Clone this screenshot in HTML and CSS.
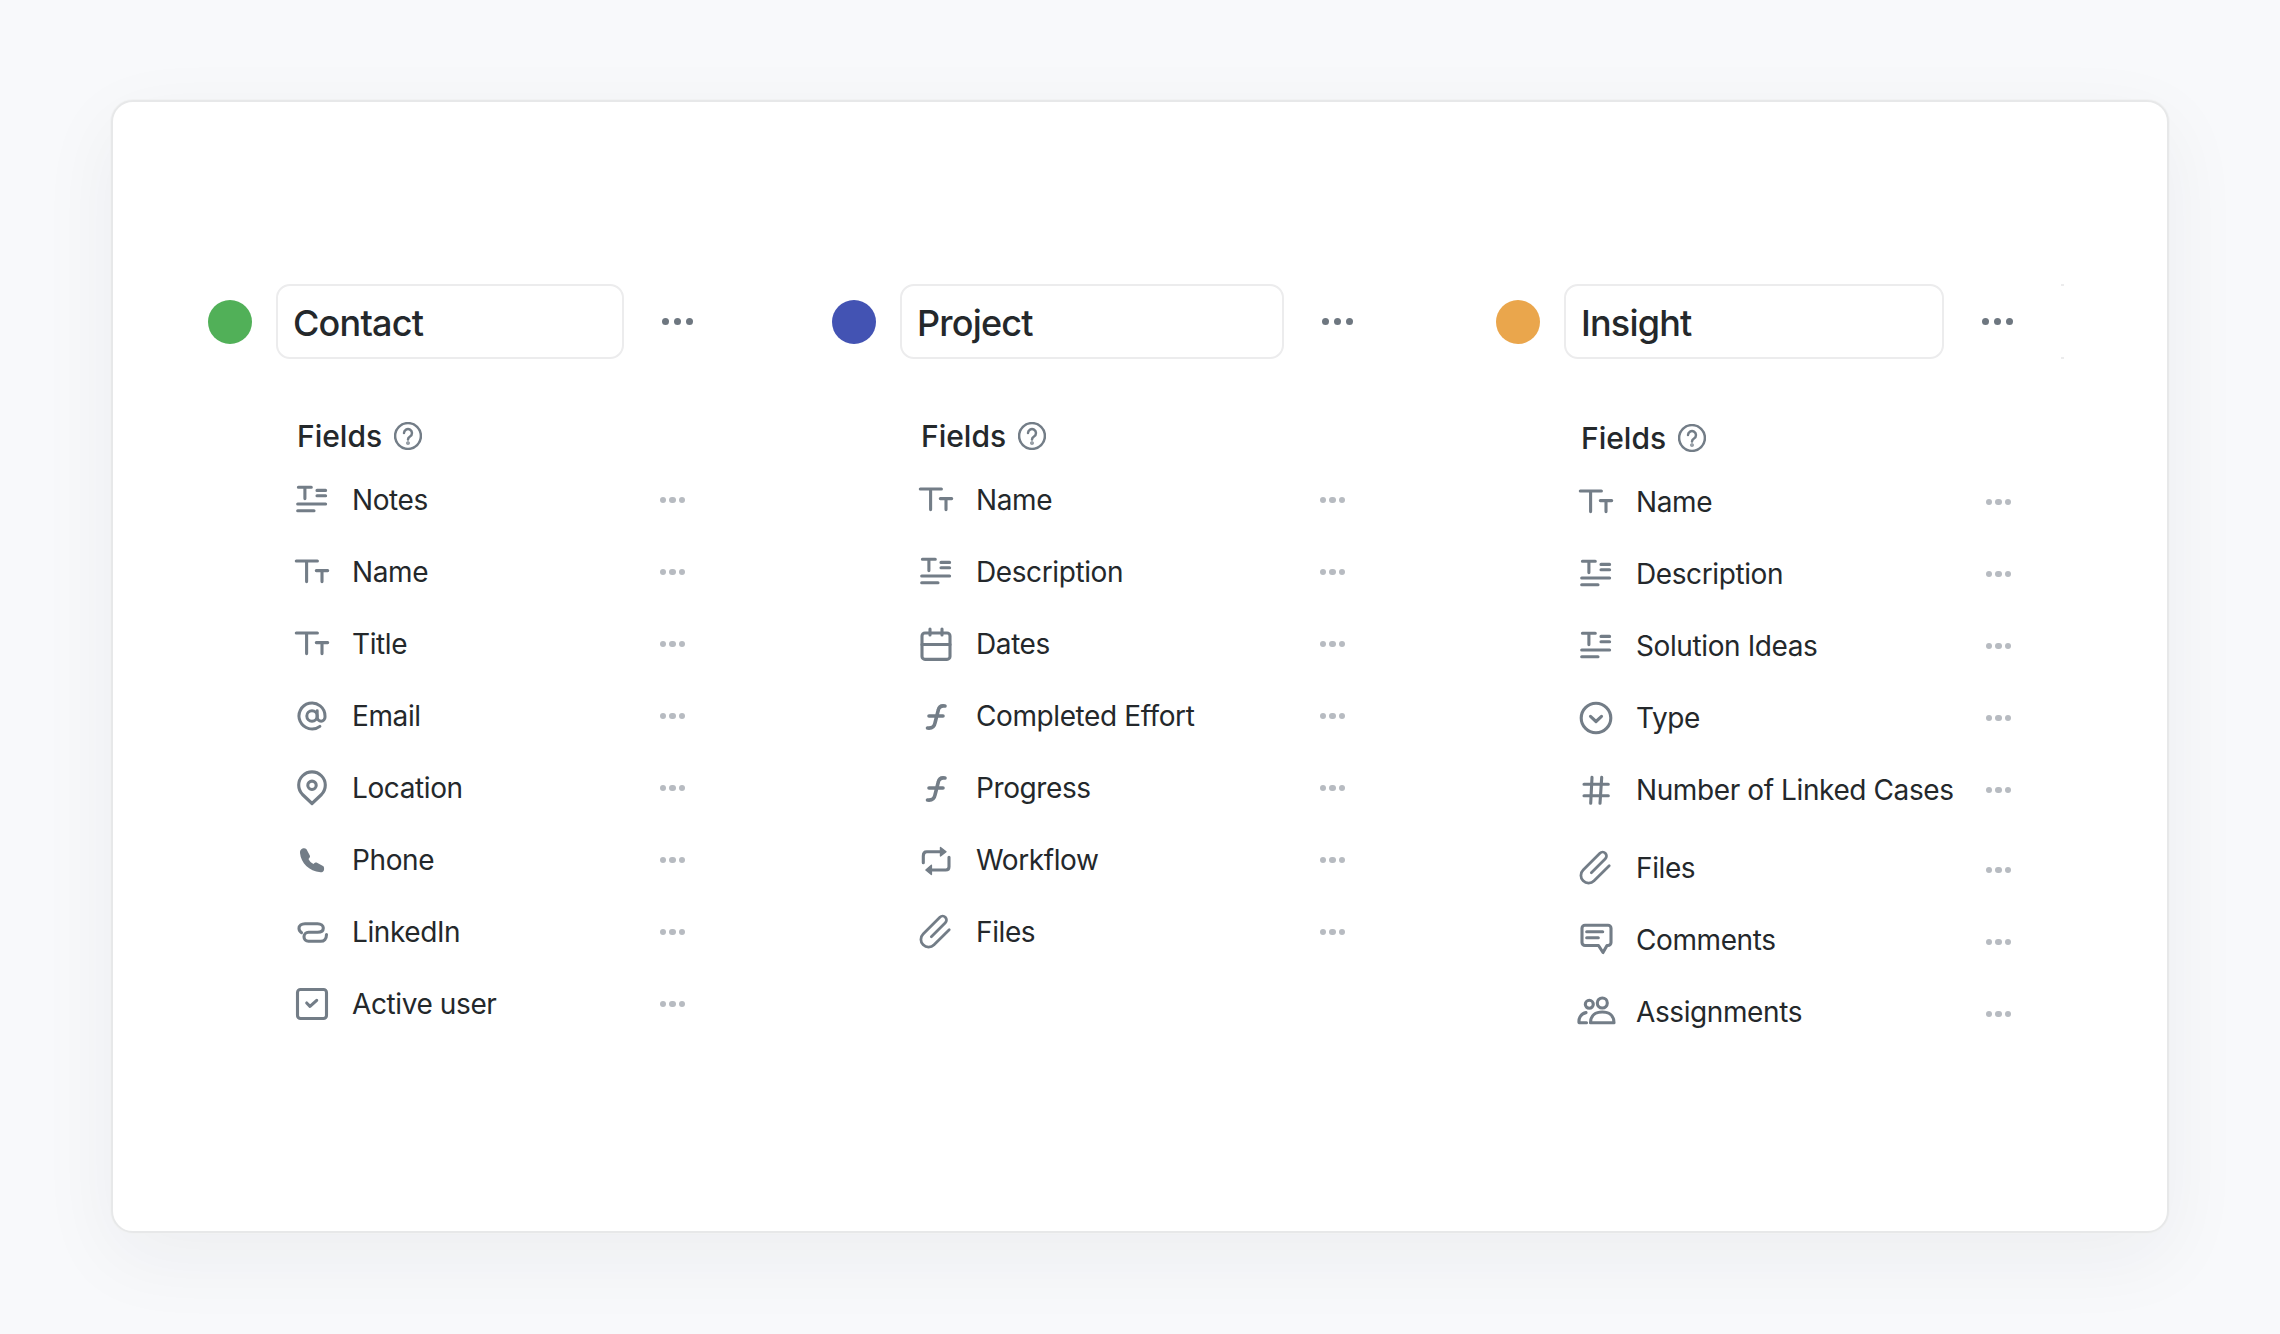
FILE: index.html
```html
<!DOCTYPE html>
<html>

<head>
    <meta charset="utf-8">
    <title>Fields</title>
    <link rel="stylesheet" href="styles.css">
</head>

<body>
    <svg class="sprite">
        <defs>
            <g id="i-longtext">
                <path d="M1.4 2.2H14.3M7.9 2.2V13.6M20 5.4H28.6M20 10.7H28.6M.7 19H28.6M.7 25.7H17" />
            </g>
            <g id="i-text">
                <path d="M-.7 4H20.4M9.6 4V24.6M19.3 13.6H30.7M25 13.6V24.6" />
            </g>
            <g id="i-email">
                <g transform="translate(-.6 -.6) scale(1.3)" stroke-width="2.3">
                    <circle cx="12" cy="12" r="4" />
                    <path d="M16 8v5a3 3 0 0 0 6 0v-1a10 10 0 1 0-3.92 7.94" />
                </g>
            </g>
            <g id="i-location">
                <path d="M15 30.5L5.5 21.5A13.3 13.3 0 1 1 24.5 21.5Z" />
                <circle cx="15" cy="12.3" r="4.2" />
            </g>
            <g id="i-phone">
                <path stroke="none" fill="currentColor" d="M5.5 3.5C7 3 8.5 3.2 9.5 4.3L12.8 10.5C13.3 11.5 13 12.5 11.5 14C12.5 16.3 14.3 18 16.5 19C18 17.6 19 17.3 20 17.8L26 21C27 21.6 27.3 23 27 25C26.5 26.8 25 27.5 23.5 27.3C12 26 4 18 3 8C2.8 6 3.7 4.3 5.5 3.5Z" />
            </g>
            <g id="i-link">
                <path d="M29.5 17.5C29.5 22 27 24.3 23.7 24.3H11.5C8.8 24.3 7 22.3 7 19.8C7 17.2 9 15.3 11.5 15.3H20.5C23.8 15.3 26.3 14 26.3 11C26.3 8.5 24 6.7 20.5 6.7H8C4.5 6.7 2 8.5 2 11.3C2 13 2.8 14.6 4.5 15.6" />
            </g>
            <g id="i-check">
                <rect x=".5" y=".5" width="29" height="29" rx="3" />
                <path d="M9.7 14L13 17.3L19.7 11.3" />
            </g>
            <g id="i-date">
                <rect x="1" y="4" width="28" height="26.4" rx="3" />
                <path d="M1 15.5H29M9 0V6M21 0V6" />
            </g>
            <g id="i-formula">
                <path stroke-width="3.6" d="M24 5C20 4.3 18 5.5 17.3 9L14 22C13.3 26 11 27.5 6.5 27M8 15H22" />
            </g>
            <g id="i-workflow">
                <path d="M2.3 17.7V11C2.3 8.3 3.5 6.7 5.7 6.7H20.7M28 12.3V21.7C28 23.7 26.7 25 24.7 25H9.7" />
                <path fill="currentColor" stroke-width="1.4" d="M19.5 2.5L25 6.7L19.5 10.9ZM10.4 20.3L4.9 25L10.4 29.4Z" />
            </g>
            <g id="i-clip">
                <path transform="rotate(-45 15 15) translate(-1.5 -1.5) scale(1.1)" stroke-width="2.5" d="M25 22H5.5A7 7 0 0 1 5.5 8H27A3.5 3.5 0 0 1 27 15H9" />
            </g>
            <g id="i-select">
                <circle cx="15" cy="15" r="14.8" />
                <path d="M9.5 13.3L15 18.5L20.5 13.3" />
            </g>
            <g id="i-number">
                <path d="M3 9.3H27.3M3 20.7H27.3M11 2.3L9.7 28.3M20.7 2.3L19 28.3" />
            </g>
            <g id="i-comment">
                <path d="M4 .2H27a3 3 0 0 1 3 3V17.5a3 3 0 0 1-3 3H26L22 27.5L17.5 20.5H4a3 3 0 0 1-3-3V3.2a3 3 0 0 1 3-3Z" />
                <path d="M5.7 6.7H21.7M5.7 12.7H17.3" />
            </g>
            <g id="i-people">
                <circle cx="21.3" cy="6" r="5" />
                <path d="M9.5 25.7C9.5 18 15 15 21.3 15C27.5 15 33 18 33 25.7Z" />
                <circle cx="8.3" cy="7.3" r="4" />
                <path d="M5.5 25.7H-2C-2.5 21 0 16.5 5 15.6" />
            </g>
        </defs>
    </svg>

    <div class="card">

        <section class="col col-contact">
            <div class="col-head">
                <span class="swatch swatch-green"></span>
                <div class="name-box">Contact</div>
                <div class="dots dots-dark"><i></i><i></i><i></i></div>
            </div>
            <div class="fields">
                <h2 class="fields-title">Fields
                    <svg class="help" viewBox="0 0 28 28"><circle cx="14" cy="14" r="12.9" /><path d="M10 11a4 4 0 1 1 6 3.5c-1.3.8-2 1.5-2 3" /><circle class="help-dot" cx="14" cy="21" r=".6" /></svg>
                </h2>
                <div class="row"><svg class="icon" viewBox="0 0 30 30"><use href="#i-longtext" /></svg><span class="label">Notes</span><div class="dots"><i></i><i></i><i></i></div></div>
                <div class="row"><svg class="icon" viewBox="0 0 30 30"><use href="#i-text" /></svg><span class="label">Name</span><div class="dots"><i></i><i></i><i></i></div></div>
                <div class="row"><svg class="icon" viewBox="0 0 30 30"><use href="#i-text" /></svg><span class="label">Title</span><div class="dots"><i></i><i></i><i></i></div></div>
                <div class="row"><svg class="icon" viewBox="0 0 30 30"><use href="#i-email" /></svg><span class="label">Email</span><div class="dots"><i></i><i></i><i></i></div></div>
                <div class="row"><svg class="icon" viewBox="0 0 30 30"><use href="#i-location" /></svg><span class="label">Location</span><div class="dots"><i></i><i></i><i></i></div></div>
                <div class="row"><svg class="icon" viewBox="0 0 30 30"><use href="#i-phone" /></svg><span class="label">Phone</span><div class="dots"><i></i><i></i><i></i></div></div>
                <div class="row"><svg class="icon" viewBox="0 0 30 30"><use href="#i-link" /></svg><span class="label">LinkedIn</span><div class="dots"><i></i><i></i><i></i></div></div>
                <div class="row"><svg class="icon" viewBox="0 0 30 30"><use href="#i-check" /></svg><span class="label">Active user</span><div class="dots"><i></i><i></i><i></i></div></div>
            </div>
        </section>

        <section class="col col-project">
            <div class="col-head">
                <span class="swatch swatch-blue"></span>
                <div class="name-box">Project</div>
                <div class="dots dots-dark"><i></i><i></i><i></i></div>
            </div>
            <div class="fields">
                <h2 class="fields-title">Fields
                    <svg class="help" viewBox="0 0 28 28"><circle cx="14" cy="14" r="12.9" /><path d="M10 11a4 4 0 1 1 6 3.5c-1.3.8-2 1.5-2 3" /><circle class="help-dot" cx="14" cy="21" r=".6" /></svg>
                </h2>
                <div class="row"><svg class="icon" viewBox="0 0 30 30"><use href="#i-text" /></svg><span class="label">Name</span><div class="dots"><i></i><i></i><i></i></div></div>
                <div class="row"><svg class="icon" viewBox="0 0 30 30"><use href="#i-longtext" /></svg><span class="label">Description</span><div class="dots"><i></i><i></i><i></i></div></div>
                <div class="row"><svg class="icon" viewBox="0 0 30 30"><use href="#i-date" /></svg><span class="label">Dates</span><div class="dots"><i></i><i></i><i></i></div></div>
                <div class="row"><svg class="icon" viewBox="0 0 30 30"><use href="#i-formula" /></svg><span class="label">Completed Effort</span><div class="dots"><i></i><i></i><i></i></div></div>
                <div class="row"><svg class="icon" viewBox="0 0 30 30"><use href="#i-formula" /></svg><span class="label">Progress</span><div class="dots"><i></i><i></i><i></i></div></div>
                <div class="row"><svg class="icon" viewBox="0 0 30 30"><use href="#i-workflow" /></svg><span class="label">Workflow</span><div class="dots"><i></i><i></i><i></i></div></div>
                <div class="row"><svg class="icon" viewBox="0 0 30 30"><use href="#i-clip" /></svg><span class="label">Files</span><div class="dots"><i></i><i></i><i></i></div></div>
            </div>
        </section>

        <section class="col col-insight">
            <div class="col-head">
                <span class="swatch swatch-orange"></span>
                <div class="name-box">Insight</div>
                <div class="dots dots-dark"><i></i><i></i><i></i></div>
                <div class="next-box"></div>
            </div>
            <div class="fields">
                <h2 class="fields-title">Fields
                    <svg class="help" viewBox="0 0 28 28"><circle cx="14" cy="14" r="12.9" /><path d="M10 11a4 4 0 1 1 6 3.5c-1.3.8-2 1.5-2 3" /><circle class="help-dot" cx="14" cy="21" r=".6" /></svg>
                </h2>
                <div class="row"><svg class="icon" viewBox="0 0 30 30"><use href="#i-text" /></svg><span class="label">Name</span><div class="dots"><i></i><i></i><i></i></div></div>
                <div class="row"><svg class="icon" viewBox="0 0 30 30"><use href="#i-longtext" /></svg><span class="label">Description</span><div class="dots"><i></i><i></i><i></i></div></div>
                <div class="row"><svg class="icon" viewBox="0 0 30 30"><use href="#i-longtext" /></svg><span class="label">Solution Ideas</span><div class="dots"><i></i><i></i><i></i></div></div>
                <div class="row"><svg class="icon" viewBox="0 0 30 30"><use href="#i-select" /></svg><span class="label">Type</span><div class="dots"><i></i><i></i><i></i></div></div>
                <div class="row row-tall"><svg class="icon" viewBox="0 0 30 30"><use href="#i-number" /></svg><span class="label">Number of Linked Cases</span><div class="dots"><i></i><i></i><i></i></div></div>
                <div class="row row-shift"><svg class="icon" viewBox="0 0 30 30"><use href="#i-clip" /></svg><span class="label">Files</span><div class="dots"><i></i><i></i><i></i></div></div>
                <div class="row row-shift"><svg class="icon" viewBox="0 0 30 30"><use href="#i-comment" /></svg><span class="label">Comments</span><div class="dots"><i></i><i></i><i></i></div></div>
                <div class="row row-shift"><svg class="icon" viewBox="0 0 30 30"><use href="#i-people" /></svg><span class="label">Assignments</span><div class="dots"><i></i><i></i><i></i></div></div>
            </div>
        </section>

    </div>
</body>

</html>
```
FILE: styles.css
```css
* {
    box-sizing: border-box;
}

body {
    margin: 0;
    padding: 100px 111px 101px;
    background-color: #f8f9fb;
    font-family: Inter, "Liberation Sans", sans-serif;
    color: #24282b;
}

.sprite {
    display: none;
}

.card {
    display: flex;
    height: 1133px;
    padding: 182px 0 0 95px;
    background-color: #fff;
    border: 2px solid #e7e8e9;
    border-radius: 22px;
    box-shadow: 0 0 0 1px #f1f2f3, 0 24px 80px rgba(30, 40, 60, 0.055);
}

/* columns */
.col-contact {
    width: 624px;
}

.col-project {
    width: 664px;
}

.col-head {
    display: flex;
    align-items: center;
    height: 75px;
}

.swatch {
    flex: none;
    width: 44px;
    height: 44px;
    margin-right: 24px;
    border-radius: 50%;
}

.swatch-green {
    background-color: #51b058;
}

.swatch-blue {
    background-color: #4353b3;
}

.swatch-orange {
    background-color: #eaa64c;
}

.name-box {
    height: 75px;
    padding-left: 15px;
    border: 2px solid #ececed;
    border-radius: 14px;
    font-size: 36px;
    font-weight: 500;
    letter-spacing: -0.8px;
    line-height: 75px;
}

.col-contact .name-box {
    width: 348px;
}

.col-project .name-box {
    width: 384px;
}

.col-insight .name-box {
    width: 380px;
}

.next-box {
    width: 3px;
    height: 75px;
    margin-left: 48px;
    border-top: 2px solid #ececed;
    border-bottom: 2px solid #ececed;
}

/* three dot menus */
.dots {
    display: flex;
    flex: none;
    gap: 3px;
}

.dots i {
    width: 6.5px;
    height: 6.5px;
    border-radius: 50%;
    background-color: #b7bbc1;
}

.dots-dark {
    gap: 5px;
    margin: 0 0 1px 38px;
}

.dots-dark i {
    width: 7px;
    height: 7px;
    background-color: #6e7780;
}

/* field lists */
.fields {
    margin-left: 89px;
}

.col-contact .fields {
    width: 388px;
}

.col-project .fields {
    width: 424px;
}

.col-insight .fields {
    width: 430px;
    margin-left: 85px;
    padding-top: 2px;
}

.fields-title {
    display: flex;
    align-items: center;
    gap: 12px;
    height: 44px;
    margin: 55px 0 6px;
    font-size: 30px;
    font-weight: 500;
}

.help {
    width: 28px;
    height: 28px;
    fill: none;
    stroke: #737d87;
    stroke-width: 2.5;
    stroke-linecap: round;
}

.help-dot {
    fill: #737d87;
}

.row {
    display: flex;
    align-items: center;
    height: 72px;
    font-size: 28px;
    letter-spacing: -0.4px;
}

.row-tall {
    margin-bottom: 6px;
}

/* rows under the tall one sit a little above their menus */
.row-shift .dots {
    margin-top: 4px;
}

.icon {
    flex: none;
    width: 30px;
    height: 30px;
    margin-right: 25px;
    overflow: visible;
    color: #737d87;
    fill: none;
    stroke: #737d87;
    stroke-width: 3.1;
    stroke-linecap: round;
    stroke-linejoin: round;
}

.label {
    flex: 1;
}
```
